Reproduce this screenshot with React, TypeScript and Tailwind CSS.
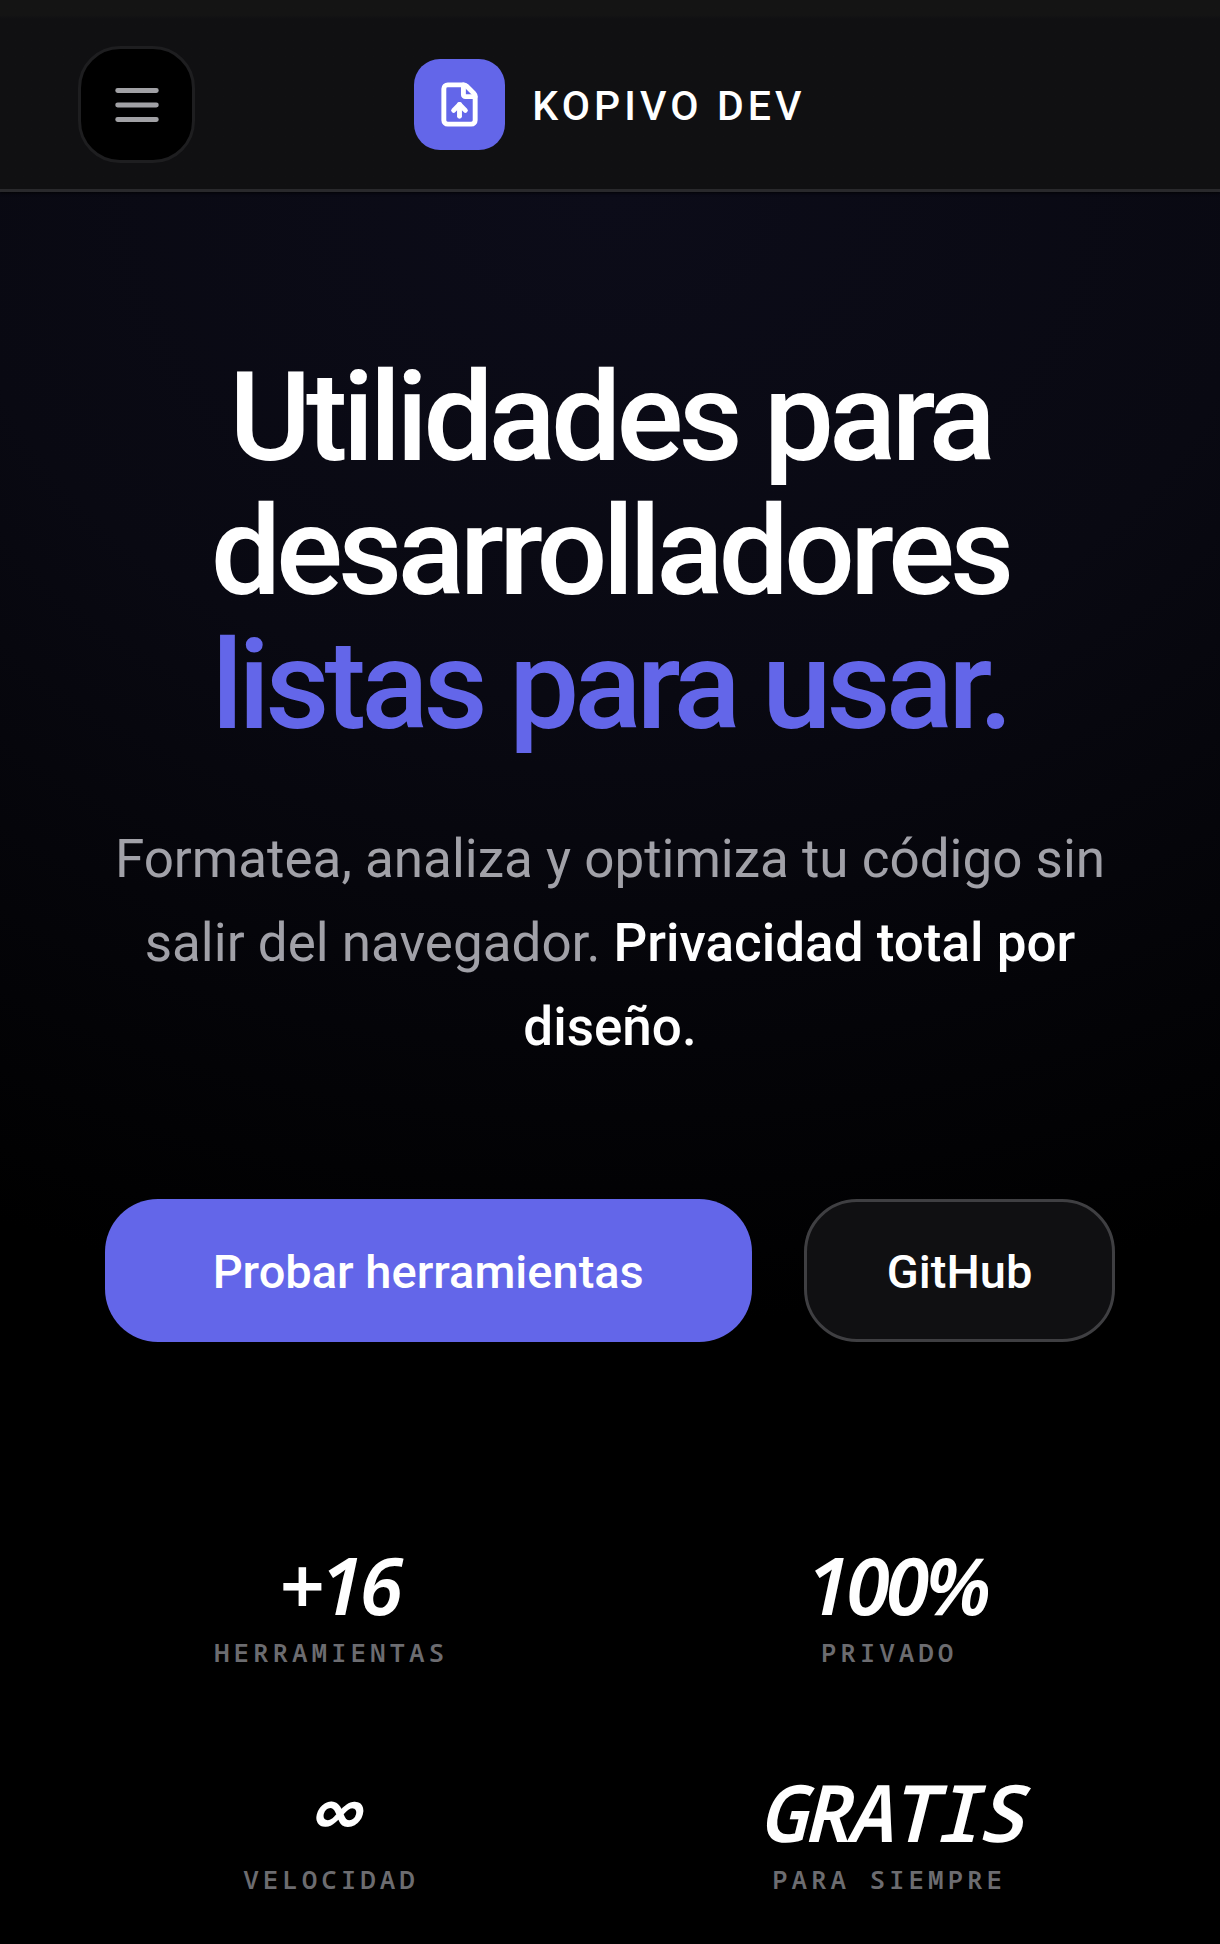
import { FileUp } from "lucide-react";
import clsx from "clsx";

const stats = [
  { value: "+16", label: "Herramientas", numeric: true },
  { value: "100%", label: "Privado", numeric: true },
  { value: "∞", label: "Velocidad", numeric: false },
  { value: "Gratis", label: "Para siempre", numeric: false },
];

function MenuIcon() {
  return (
    <svg
      viewBox="0 0 24 24"
      className="size-[58px]"
      fill="none"
      stroke="currentColor"
      strokeWidth={2}
      strokeLinecap="round"
      aria-hidden="true"
    >
      <path d="M4 6h16M4 12h16M4 18h16" />
    </svg>
  );
}

function Header() {
  return (
    <header className="relative grid grid-cols-[1fr_auto_1fr] items-center border-b-3 border-[#29292c] bg-linear-to-b from-[#141414] from-8% to-[#101012] to-10% px-[78px] pt-[46px] pb-[26px] shadow-sm shadow-black/60">
      <button
        type="button"
        aria-label="Abrir menú"
        className="flex size-[117px] items-center justify-center rounded-[42px] border-3 border-[#1e1e20] bg-black text-[#a1a1a5]"
      >
        <MenuIcon />
      </button>
      <a href="#" className="flex items-center gap-[27px]">
        <span className="flex size-[91px] items-center justify-center rounded-[26px] bg-[#6366e9]">
          <FileUp size={47} strokeWidth={2.5} />
        </span>
        <span className="pt-1 text-[41px] font-medium tracking-widest">KOPIVO DEV</span>
      </a>
    </header>
  );
}

function Hero() {
  return (
    <section className="flex flex-col items-center text-center">
      <h1 className="text-[125px] leading-[134px] font-medium tracking-[-0.04em]">
        Utilidades para
        <br />
        desarrolladores
        <br />
        <span className="text-[#6366e9]">listas para usar.</span>
      </h1>
      <p className="mt-[64px] max-w-[1040px] text-[53px] leading-[84px] text-[#a1a1a8]">
        Formatea, analiza y optimiza tu código sin salir del navegador.{" "}
        <strong className="font-medium text-white">Privacidad total por diseño.</strong>
      </p>
      <div className="mt-[130px] flex gap-[52px] text-[47px] font-medium">
        <a
          href="#herramientas"
          className="flex h-[143px] items-center rounded-[53px] bg-[#6366e9] px-[108px] pt-1"
        >
          Probar herramientas
        </a>
        <a
          href="#github"
          className="flex h-[143px] items-center rounded-[53px] border-3 border-[#3f3f42] bg-[#101012] px-[80px] pt-1"
        >
          GitHub
        </a>
      </div>
    </section>
  );
}

function Stats() {
  return (
    <dl className="mt-[203px] grid grid-cols-2 gap-x-[22px] gap-y-[102px] text-center">
      {stats.map((stat) => (
        <div key={stat.label} className="flex flex-col-reverse gap-[11px]">
          <dt className="font-['Noto_Sans_Mono','DejaVu_Sans_Mono',monospace] text-[26px] leading-[35px] font-semibold tracking-[0.15em] text-[#6c6c70] uppercase">
            {stat.label}
          </dt>
          <dd
            className={clsx(
              "text-[79px] leading-[79px] font-semibold tracking-tighter uppercase italic",
              stat.numeric
                ? "pl-4 font-['Noto_Sans',sans-serif]"
                : "font-['Noto_Sans_Mono','DejaVu_Sans_Mono',monospace]"
            )}
          >
            {stat.value}
          </dd>
        </div>
      ))}
    </dl>
  );
}

export default function App() {
  return (
    <div className="min-h-screen bg-black font-['Roboto',sans-serif] text-white">
      <Header />
      <main className="bg-[radial-gradient(ellipse_120%_65%_at_50%_0%,#0c0c19_0%,#090912_45%,#000000_100%)] px-[63px] pt-[159px] pb-[37px]">
        <Hero />
        <Stats />
      </main>
    </div>
  );
}
